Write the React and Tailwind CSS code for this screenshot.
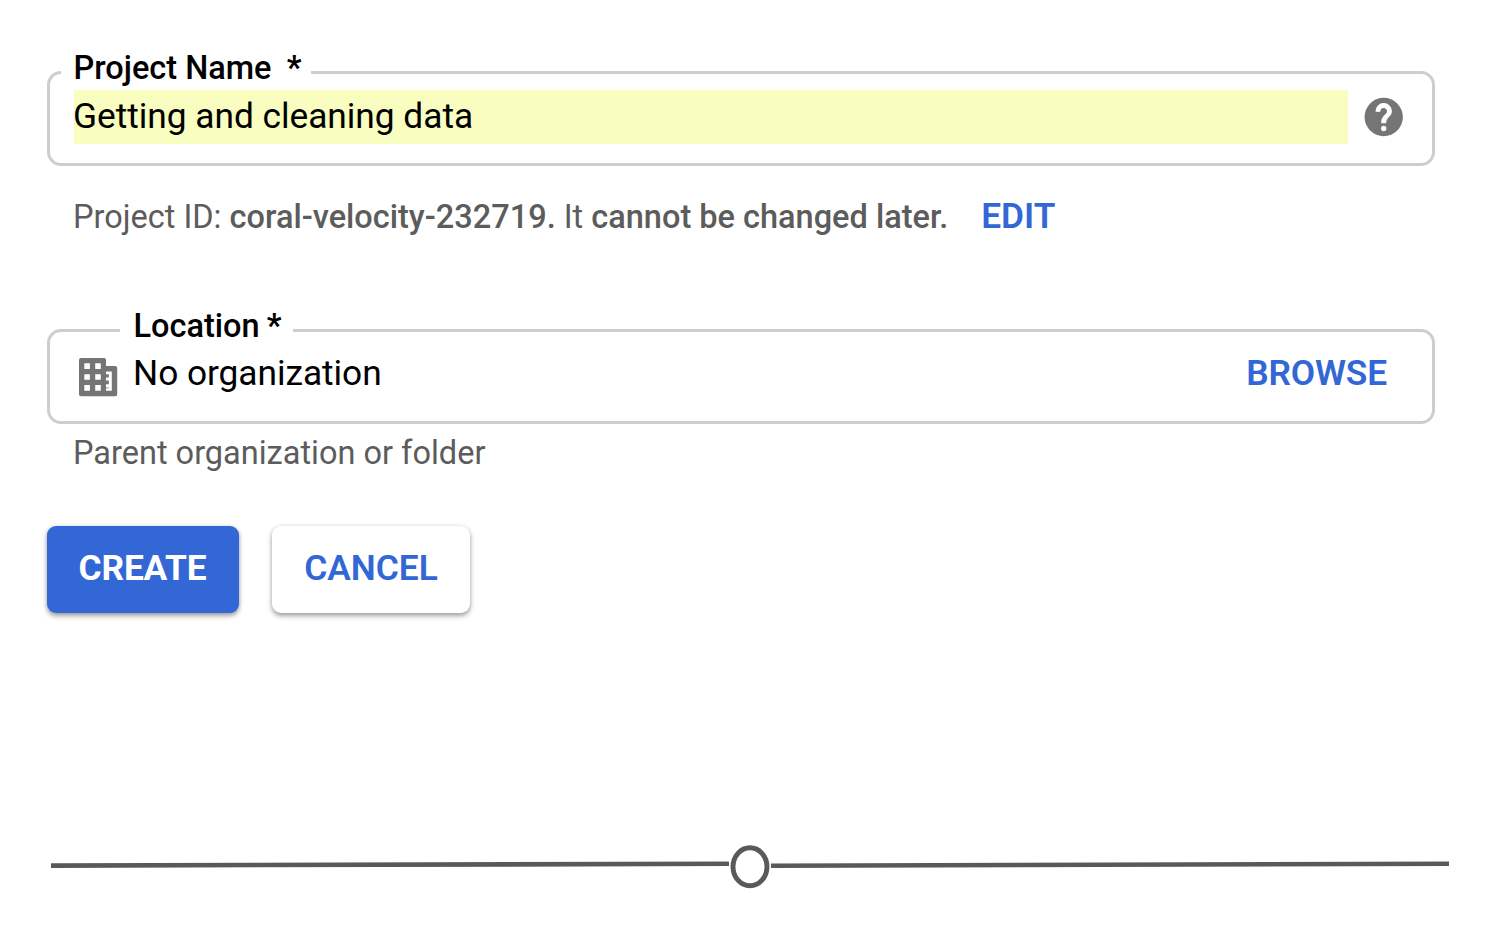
function HelpIcon() {
  return (
    <svg viewBox="0 0 24 24" className="size-[46px] shrink-0" aria-hidden="true">
      <circle cx="11.850" cy="12" r="10" className="fill-[#757575]" />
      <g className="fill-white stroke-white" strokeWidth="0.550" strokeLinejoin="round">
        <circle cx="11.850" cy="18" r="1.100" />
        <path d="M14.920 11.250l-.9.920C13.300 12.900 12.850 13.500 12.850 15h-2v-.5c0-1.100.45-2.100 1.170-2.830l1.240-1.260c.37-.36.59-.86.59-1.410 0-1.100-.9-2-2-2s-2 .9-2 2h-2c0-2.210 1.790-4 4-4s4 1.790 4 4c0 .88-.36 1.680-.93 2.250z" />
      </g>
    </svg>
  );
}

function OrganizationIcon() {
  return (
    <svg viewBox="0 0 48 48" className="size-12 shrink-0 fill-[#757575]" aria-hidden="true">
      <path
        fillRule="evenodd"
        d="M7 5h23a2 2 0 0 1 2 2v6h9.200a2 2 0 0 1 2 2v26.200a2 2 0 0 1-2 2H7a2 2 0 0 1-2-2V7a2 2 0 0 1 2-2z
           M10.300 10.300v5.600h5.600v-5.600z M21.200 10.300v5.600h5.600v-5.600z
           M10.300 21.200v5.600h5.600v-5.600z M21.200 21.200v5.600h5.600v-5.600z
           M10.300 32.100v5.600h5.600v-5.600z M21.200 32.100v5.600h5.600v-5.600z
           M32 18.600v2.600h2.800v3.200H32v3.200h2.800v3.600H32v3.200h2.800v0.800H32v2.500h5.800V18.600z"
      />
    </svg>
  );
}

function Divider() {
  return (
    <svg viewBox="0 0 1398 48" className="mt-[228px] ml-1 block h-12 w-[1398px] fill-none stroke-[#595959]" aria-hidden="true">
      <path d="M0 24.600 678 22.800M720 24.700 1398 22.800" strokeWidth="4.600" />
      <ellipse cx="699" cy="25.800" rx="17" ry="19" strokeWidth="4.900" />
    </svg>
  );
}

export default function App() {
  return (
    <main className="h-[938px] w-[1500px] overflow-hidden bg-white pt-[55px] pl-[47px] font-['Roboto',sans-serif] text-[32.5px] text-black">
      <fieldset className="h-[111px] w-[1388px] rounded-[14px] border-3 border-[#cecece] pl-[11px]">
        <legend className="h-[35px] w-[250px] pl-[12.5px] leading-[26px] font-medium whitespace-pre">
          Project Name{'  '}<span className="-ml-px font-bold">*</span>
        </legend>
        <div className="flex">
          <div className="ml-[13px] h-[54px] w-[1274px] bg-[#f9fdc0] text-[35.3px] leading-[52px]">
            <span className="-ml-px tracking-[-0.03px]">Getting and cleaning data</span>
          </div>
          <div className="mt-1 ml-[13px]">
            <HelpIcon />
          </div>
        </div>
      </fieldset>

      <div className="mt-[29px] flex h-[45px] items-baseline pl-[26px] leading-[42px] whitespace-pre text-[#5c5c5c]">
        <p>
          Project ID: <b className="font-medium">coral-velocity-232719.</b> It{' '}
          <b className="font-medium">cannot be changed later.</b>
        </p>
        <button className="ml-[33px] text-[35.3px] font-semibold text-[#3367d6]">EDIT</button>
      </div>

      <fieldset className="mt-[73px] h-[111px] w-[1388px] rounded-[14px] border-3 border-[#cecece] pl-[70px]">
        <legend className="h-[35px] w-[173px] pl-[13.5px] leading-[27px] font-medium whitespace-pre">
          Location <span className="-ml-px font-bold">*</span>
        </legend>
        <div className="-mt-px -ml-[46px] flex text-[35.3px] leading-[52px]">
          <div className="mt-[6px]">
            <OrganizationIcon />
          </div>
          <span className="ml-[11px] grow tracking-[-0.05px]">No organization</span>
          <button className="mr-[45px] h-[53px] leading-[53px] font-semibold tracking-[-0.15px] text-[#3367d6]">BROWSE</button>
        </div>
      </fieldset>
      <p className="mt-[8px] h-[42px] pl-[26px] leading-[42px] text-[#5c5c5c]">Parent organization or folder</p>

      <div className="mt-[52px] flex gap-[33px] text-[35.3px] leading-[84px]">
        <button className="h-[87px] w-[192px] rounded-[9px] bg-[#3367d6] pr-px pb-[3px] font-bold tracking-[-0.15px] text-white shadow-[0_3px_5px_rgba(0,0,0,0.35),0_0_4px_rgba(0,0,0,0.12)]">
          CREATE
        </button>
        <button className="h-[87px] w-[198px] rounded-[9px] bg-white pb-[3px] font-semibold text-[#3367d6] shadow-[0_3px_5px_rgba(0,0,0,0.35),0_0_4px_rgba(0,0,0,0.1)]">
          CANCEL
        </button>
      </div>

      <Divider />
    </main>
  );
}
